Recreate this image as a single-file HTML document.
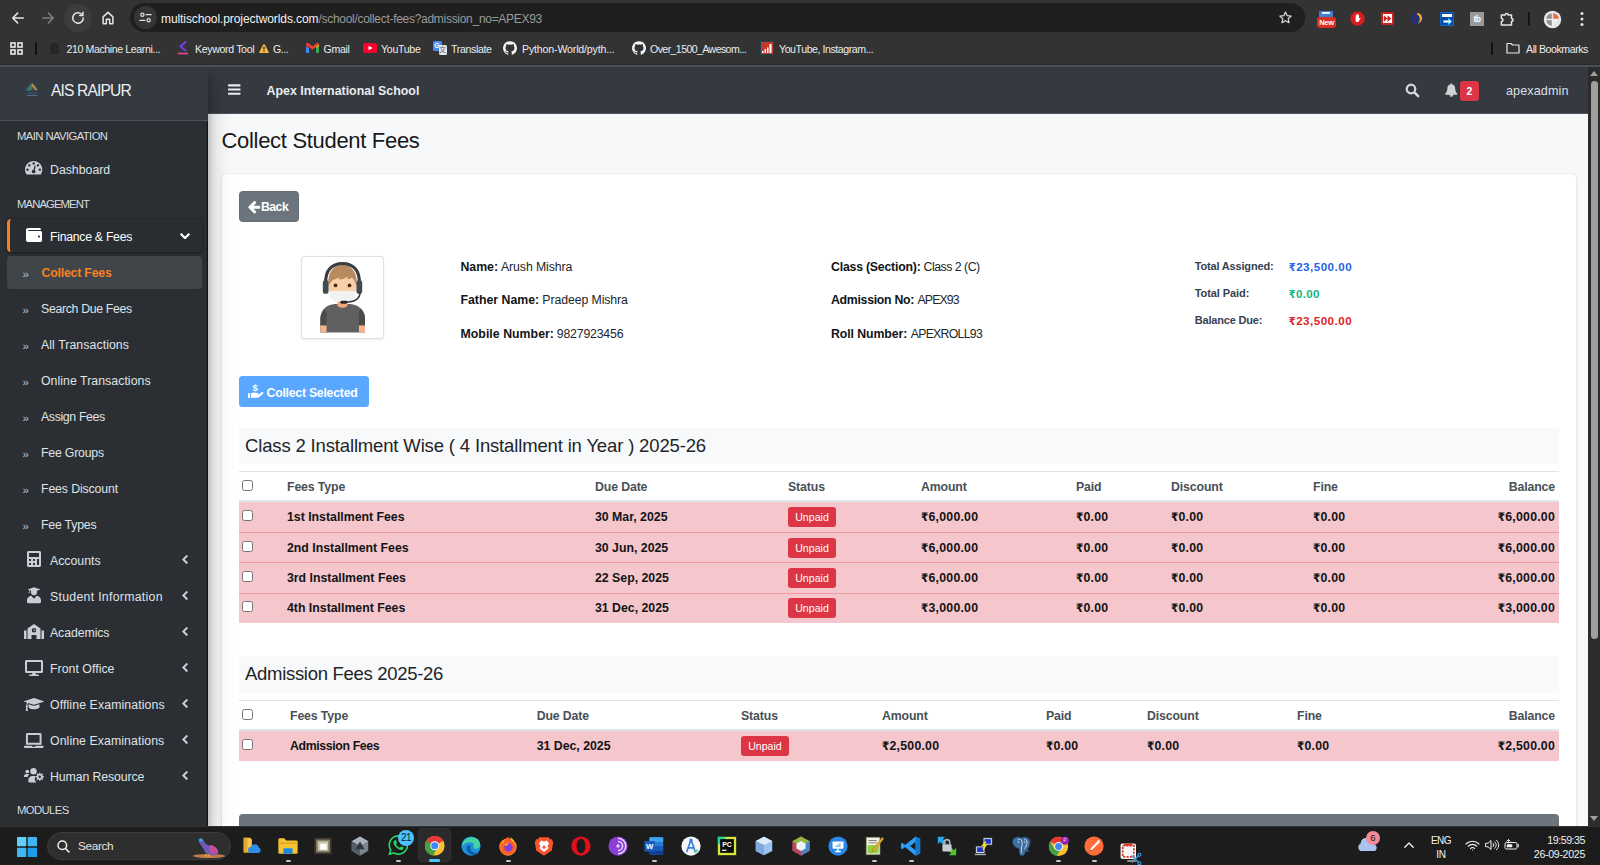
<!DOCTYPE html>
<html lang="en">
<head>
<meta charset="utf-8">
<title>Collect Student Fees</title>
<style>
*{box-sizing:border-box;margin:0;padding:0}
html,body{width:1600px;height:865px;overflow:hidden;background:#1c1c1c}
body{font-family:"Liberation Sans",sans-serif;font-size:12.3px;color:#212529;position:relative}
svg{display:block}
.a{position:absolute}

/* ---------- browser chrome ---------- */
#toolbar{position:absolute;left:0;top:0;width:1600px;height:66px;background:#333333}
#omni{position:absolute;left:130px;top:3px;width:1175px;height:29px;border-radius:15px;background:#1f1f1f}
#omni .chip{position:absolute;left:4px;top:3px;width:23px;height:23px;border-radius:12px;background:#353535}
#url{position:absolute;left:31px;top:1.5px;line-height:29px;font-size:12px;color:#9a9a9a;letter-spacing:-0.29px;white-space:nowrap}
#url b{font-weight:400;color:#f1f1f1;letter-spacing:-0.09px}
#reloadbg{position:absolute;left:64px;top:4px;width:28px;height:28px;border-radius:14px;background:#3c3c3c}
#bm{position:absolute;left:0;top:36px;width:1600px;height:28px;color:#ececec;font-size:10.6px;white-space:nowrap}
#bm .t{position:absolute;top:0.5px;line-height:24px;letter-spacing:-0.42px}
#bm .ic{position:absolute;top:5px}
#chromeline{position:absolute;left:0;top:64px;width:1600px;height:3px;background:#4b5056;border-top:1px solid #2a2a2a;z-index:9}

/* ---------- page ---------- */
#page{position:absolute;left:0;top:66px;width:1588px;height:760px;background:#f7f8fa;overflow:hidden}
#sidebar{position:absolute;left:0;top:0;width:208px;height:760px;background:#2b2f34;color:#e3e6e9;z-index:3;box-shadow:0 11.7px 23.3px rgba(0,0,0,.25),0 8.3px 8.3px rgba(0,0,0,.22),inset -1.2px 0 0 rgba(10,12,16,.75)}
#brand{position:absolute;left:0;top:0;width:208px;height:55px;background:#343a40;border-bottom:1px solid #4b545c}
#brand .bt{position:absolute;left:51px;top:0;line-height:49.5px;font-size:15.6px;color:#eceef0;letter-spacing:-0.85px;white-space:nowrap}
.nh{position:absolute;left:17px;font-size:11.3px;color:#d9dcdf;letter-spacing:-0.6px;white-space:nowrap;line-height:14px;height:14px}
.ni{position:absolute;left:50px;font-size:12.3px;color:#dfe3e7;white-space:nowrap;line-height:16px;height:16px;letter-spacing:-0.22px}
.si{position:absolute;left:41px;font-size:12.3px;color:#dfe3e7;white-space:nowrap;line-height:16px;height:16px;letter-spacing:-0.2px}
.rq{position:absolute;left:22.5px;font-size:11.5px;color:#b5c0cc;line-height:16px;height:16px;margin-top:.5px}
.nic{position:absolute;color:#e6e9ec}
.car{position:absolute;left:181px;color:#e6e9ec}
#fin{position:absolute;left:6.5px;top:152.7px;width:195.5px;height:33.6px;border-radius:4px;background:#2a2d32;border-left:3px solid #f5821f;box-shadow:0 1px 3px rgba(0,0,0,.4),0 0 2px rgba(0,0,0,.25)}
#cf{position:absolute;left:6.7px;top:190px;width:195.3px;height:33px;border-radius:4px;background:#40454a}
#navbar{position:absolute;left:208px;top:0;width:1380px;height:48px;background:#343a40;border-bottom:1px solid #4b545c;z-index:2;color:#e9ecef}
#navbar .ttl{position:absolute;left:58.5px;top:1.5px;line-height:47px;font-size:12.4px;font-weight:700;white-space:nowrap}
#navbar .usr{position:absolute;left:1298px;top:1.5px;line-height:47px;font-size:12.6px;white-space:nowrap;letter-spacing:0.1px;color:#dcdfe2}
#nbadge{position:absolute;left:1252px;top:15px;width:19px;height:19.5px;border-radius:3px;background:#dc3545;color:#fff;font-size:10.5px;font-weight:700;line-height:20px;text-align:center;box-shadow:0 0 0 .5px #1f3a3f}
#h1{position:absolute;left:221.5px;top:58px;font-size:22px;line-height:32px;color:#17191c;letter-spacing:-0.31px;white-space:nowrap}
#card{position:absolute;left:221.6px;top:107px;width:1354.6px;height:700px;background:#fff;border-radius:4px 4px 0 0;box-shadow:0 0 1px rgba(0,0,0,.2),0 1px 3px rgba(0,0,0,.14)}
.btn{position:absolute;border-radius:3.5px;color:#fff;font-size:12.3px;font-weight:700;white-space:nowrap}
#back{left:239px;top:191px;width:60px;height:31px;background:#6c757d;border:1px solid #646c74}
#csel{left:239px;top:376px;width:130px;height:31px;background:#59a7ff}
.lb{position:absolute;white-space:nowrap;font-size:12.3px;line-height:16px;height:16px;color:#212529}
.lb b{color:#111417}
.tl{position:absolute;white-space:nowrap;font-size:11px;line-height:14px;height:14px;font-weight:700;color:#374151}
.tv{position:absolute;white-space:nowrap;font-size:11.6px;line-height:15px;height:15px;font-weight:700}
#avatar{position:absolute;left:301.4px;top:256px;width:83px;height:83px;border:1px solid #dee2e6;border-radius:3px;background:#fff;box-shadow:0 1px 2px rgba(0,0,0,.08)}
.gh{position:absolute;left:238.5px;width:1320.5px;height:37px;background:#f8f9fa;font-size:18.5px;line-height:37px;padding-left:6.5px;color:#1f2428;letter-spacing:-0.17px;white-space:nowrap}
table{position:absolute;left:238.5px;width:1320.5px;border-collapse:separate;border-spacing:0;table-layout:fixed;font-size:12.3px}
th,td{padding:0 4px;text-align:left;vertical-align:middle;white-space:nowrap;overflow:visible}
th{font-weight:700;color:#495057;height:30.7px;border-top:1px solid #dee2e6;border-bottom:2px solid #e1e6ea;letter-spacing:-0.12px;padding-top:2px}
td{font-weight:700;color:#111417;height:30.5px;background:#f5c6cb;border-top:1px solid #ee9aa2;letter-spacing:0}
tr.f td{border-top:0;height:30.3px}
#t2 tr.f td{height:29.8px}
tr.l td{height:30px}
td.m{letter-spacing:.23px}
.r{font-family:"DejaVu Sans Condensed","DejaVu Sans",sans-serif;font-size:.95em}
th:last-child,td:last-child{text-align:right}
.cb{display:block;width:11px;height:11px;border:1px solid #767676;border-radius:2.5px;background:#fff;margin-top:-3px;margin-left:-.5px}
.bdg{display:inline-block;width:48px;height:20px;border-radius:3px;background:#dc3545;color:#fff;font-size:10.6px;font-weight:400;line-height:20px;text-align:center;letter-spacing:0;vertical-align:middle}
#gbar{position:absolute;left:238.5px;top:814.3px;width:1320.5px;height:20px;background:#6c757d;border-radius:4px 4px 0 0}

/* ---------- scrollbar ---------- */
#sb{position:absolute;left:1588px;top:66px;width:12px;height:760px;background:#2c2c2c}
#sb .th{position:absolute;left:3px;top:15px;width:7px;height:558px;border-radius:4px;background:#9f9f9f}
#sb .up{position:absolute;left:2px;top:5px;width:0;height:0;border-left:4px solid transparent;border-right:4px solid transparent;border-bottom:5px solid #9f9f9f}
#sb .dn{position:absolute;left:2px;top:750px;width:0;height:0;border-left:4px solid transparent;border-right:4px solid transparent;border-top:5px solid #9f9f9f}

/* ---------- taskbar ---------- */
#taskbar{position:absolute;left:0;top:826px;width:1600px;height:39px;background:#1c1c1c;color:#f2f2f2;box-shadow:inset 0 1px 0 #343434}
#tsearch{position:absolute;left:47px;top:6px;width:184px;height:28px;border-radius:14px;background:#2e2e2e;border:1px solid #3b3b3b}
#tsearch .t{position:absolute;left:30px;top:0;line-height:26px;font-size:11.8px;color:#e4e4e4;letter-spacing:-0.35px}
.ti{position:absolute;top:9px;width:22px;height:22px;margin-left:1px}
.tu{position:absolute;top:33.5px;height:2.5px;border-radius:1.2px;background:#c4c4c4}
.tt{position:absolute;white-space:nowrap;font-size:10.6px;line-height:13px;color:#f2f2f2;letter-spacing:-0.35px}
</style>
</head>
<body>

<!-- ================= BROWSER CHROME ================= -->
<div id="toolbar">
  <div id="reloadbg"></div>
  <!-- back / forward / reload / home -->
  <svg class="a" style="left:9px;top:9px" width="18" height="18" viewBox="0 0 24 24" fill="none" stroke="#e6e6e6" stroke-width="2" stroke-linecap="round" stroke-linejoin="round"><path d="M19 12H5.5M11.5 5.5 5 12l6.5 6.5"/></svg>
  <svg class="a" style="left:39px;top:9px" width="18" height="18" viewBox="0 0 24 24" fill="none" stroke="#7d7d7d" stroke-width="2" stroke-linecap="round" stroke-linejoin="round"><path d="M5 12h13.5M12.5 5.5 19 12l-6.5 6.5"/></svg>
  <svg class="a" style="left:69px;top:9px" width="18" height="18" viewBox="0 0 24 24" fill="none" stroke="#e6e6e6" stroke-width="2" stroke-linecap="round" stroke-linejoin="round"><path d="M19 12a7 7 0 1 1-2.2-5.1"/><path d="M18.6 4.2v4.4h-4.4" /></svg>
  <svg class="a" style="left:99px;top:9px" width="18" height="18" viewBox="0 0 24 24" fill="none" stroke="#e6e6e6" stroke-width="2" stroke-linecap="round" stroke-linejoin="round"><path d="M5.5 10.5 12 4.5l6.5 6v9h-4.300v-6H9.800v6H5.500z"/></svg>

  <div id="omni">
    <div class="chip"></div>
    <svg class="a" style="left:8px;top:7px" width="15" height="15" viewBox="0 0 24 24" fill="none" stroke="#e0e0e0" stroke-width="2" stroke-linecap="round"><circle cx="7" cy="7.500" r="2.600"/><path d="M13 7.500h8"/><circle cx="17" cy="16.500" r="2.600"/><path d="M3 16.500h8"/></svg>
    <div id="url"><b>multischool.projectworlds.com</b>/school/collect-fees?admission_no=APEX93</div>
    <!-- star -->
    <svg class="a" style="left:1148px;top:7px" width="15" height="15" viewBox="0 0 24 24" fill="none" stroke="#dcdcdc" stroke-width="1.900" stroke-linejoin="round"><path d="M12 3.200l2.700 5.900 6.400.700-4.800 4.300 1.400 6.300L12 17.100l-5.700 3.300 1.400-6.300-4.800-4.300 6.400-.700z"/></svg>
  </div>

  <!-- extension icons -->
  <div class="a" style="left:1319px;top:11px;width:14px;height:6px;background:#3f7fd6;border-radius:1px"></div>
  <div class="a" style="left:1322px;top:12px;width:8px;height:2px;background:#e8f0fb"></div>
  <div class="a" style="left:1317px;top:17px;width:19px;height:11px;border-radius:3px;background:#d93025;color:#fff;font-size:7.5px;font-weight:700;line-height:11px;text-align:center;letter-spacing:-0.3px">New</div>
  <svg class="a" style="left:1350px;top:11px" width="15" height="15" viewBox="0 0 24 24"><path fill="#e01b1b" d="M7.500 1h9L23 7.500v9L16.500 23h-9L1 16.500v-9z"/><path fill="#fff" d="M9 7.500c0-.800 1.300-.800 1.300 0V6c0-.900 1.400-.900 1.400 0v-.500c0-.900 1.400-.900 1.400 0V6.500c0-.800 1.300-.800 1.300 0v6l1.200-1.300c.700-.600 1.500.100 1 .800l-2.400 4.200c-.400.800-1.100 1.300-2 1.300h-1.400C9.500 17.500 9 16.500 9 15z"/></svg>
  <div class="a" style="left:1381px;top:12px;width:13px;height:13px;border-radius:2px;background:#fff;border:2px solid #d11f1f"></div>
  <svg class="a" style="left:1383px;top:14px" width="9" height="9" viewBox="0 0 24 24"><path fill="#d11f1f" d="M2 3l10 9-10 9zM12 3l10 9-10 9z"/></svg>
  <svg class="a" style="left:1410px;top:11px" width="15" height="15" viewBox="0 0 24 24"><circle cx="11" cy="12" r="10" fill="#27316b"/><path fill="#f5a623" d="M13 3c6 2 8 8 5 13-1.500 2.500-4 4-6 4 3-2 4-5 3.500-8S14 6 11 5.500C11 4 12 3 13 3z"/></svg>
  <div class="a" style="left:1440px;top:12px;width:14px;height:14px;background:#0d47a1;border:1px solid #1565c0"></div>
  <div class="a" style="left:1442px;top:14px;width:10px;height:3px;background:#fff"></div>
  <svg class="a" style="left:1443px;top:17px" width="10" height="9" viewBox="0 0 20 18"><path fill="#29b6f6" d="M0 6h10V1l9 8-9 8v-5H0z"/><path fill="#fff" d="M2 7.500h9.500V4.500l5 4.500-5 4.500v-3H2z"/></svg>
  <div class="a" style="left:1470px;top:12px;width:14px;height:14px;background:#9a9a9a;color:#fff;font-size:8.5px;font-weight:700;line-height:14px;text-align:center;letter-spacing:-0.5px">tb</div>
  <svg class="a" style="left:1498px;top:10px" width="18" height="18" viewBox="0 0 24 24" fill="none" stroke="#e6e6e6" stroke-width="2" stroke-linejoin="round"><path d="M9.500 6.500a2 2 0 0 1 4 0H18v4.700a2 2 0 0 1 0 4V20H4.500v-4.500a2.100 2.100 0 0 0 0-4.200V6.500z"/></svg>
  <div class="a" style="left:1528px;top:12px;width:2px;height:14px;background:#141414;border-radius:1px"></div>
  <svg class="a" style="left:1543px;top:10px" width="19" height="19" viewBox="0 0 24 24"><circle cx="12" cy="12" r="11" fill="#e8e8e8"/><circle cx="12" cy="12" r="8" fill="#8d8d8d"/><path fill="#ef6c3a" d="M12 12V4a8 8 0 0 1 8 8z"/><path fill="#e8e8e8" d="M11 3h2v18h-2zM3 11h18v2H3z"/><path fill="#fff" d="M12 12h8a8 8 0 0 1-8 8z" opacity=".850"/></svg>
  <svg class="a" style="left:1579px;top:11px" width="6" height="16" viewBox="0 0 6 16" fill="#e6e6e6"><circle cx="3" cy="2.500" r="1.500"/><circle cx="3" cy="8" r="1.500"/><circle cx="3" cy="13.500" r="1.500"/></svg>

  <!-- bookmarks bar -->
  <div id="bm">
    <svg class="a" style="left:10px;top:6px" width="13" height="13" viewBox="0 0 13 13" fill="none" stroke="#e8e8e8" stroke-width="1.600"><rect x="1" y="1" width="4" height="4"/><rect x="8" y="1" width="4" height="4"/><rect x="1" y="8" width="4" height="4"/><rect x="8" y="8" width="4" height="4"/></svg>
    <div class="a" style="left:35px;top:6px;width:2px;height:13px;background:#111;border-radius:1px"></div>
    <div class="a" style="left:50px;top:7px;width:9px;height:11px;background:#262626;border-radius:2px"></div>
    <span class="t" style="left:66.500px;letter-spacing:-0.400px">210 Machine Learni...</span>
    <svg class="a" style="left:177px;top:5px" width="12" height="14" viewBox="0 0 12 14" fill="none"><path d="M8.500 1 3.500 5.500l5 4" stroke="#7c3aed" stroke-width="2" stroke-linecap="round" stroke-linejoin="round"/><path d="M1 12.500h10" stroke="#ec4899" stroke-width="1.600"/></svg>
    <span class="t" style="left:195px;letter-spacing:-0.350px">Keyword Tool</span>
    <svg width="10" height="9" viewBox="-1 -1536 1794 1664" preserveAspectRatio="xMidYMid meet" class="a" style="left:258.500px;top:7.500px"><path fill="#f6b73c" transform="scale(1,-1)" d="M1024 161V351Q1024 365 1014 374Q1005 384 992 384H800Q787 384 778 374Q768 365 768 351V161Q768 147 778 138Q787 128 800 128H992Q1005 128 1014 138Q1024 147 1024 161ZM1022 535 1040 994Q1040 1006 1030 1013Q1017 1024 1006 1024H786Q775 1024 762 1013Q752 1006 752 992L769 535Q769 525 779 518Q789 512 803 512H988Q1002 512 1012 518Q1021 525 1022 535ZM1008 1469 1776 61Q1811 -2 1774 -65Q1757 -94 1728 -111Q1698 -128 1664 -128H128Q94 -128 64 -111Q35 -94 18 -65Q-19 -2 16 61L784 1469Q801 1500 831 1518Q861 1536 896 1536Q931 1536 961 1518Q991 1500 1008 1469Z"/></svg>
    <span class="t" style="left:273px">G...</span>
    <svg class="a" style="left:306px;top:7px" width="13" height="10" viewBox="0 0 26 20"><path fill="#4285f4" d="M0 3v15a2 2 0 0 0 2 2h4V8z"/><path fill="#34a853" d="M26 3v15a2 2 0 0 1-2 2h-4V8z"/><path fill="#ea4335" d="M0 3c0-3 3-4 5-2.500l8 6 8-6C23-1 26 0 26 3l-6 5-7 5.200L6 8z"/><path fill="#fbbc04" d="M20 8l6-5v3l-6 4.500z"/><path fill="#c5221f" d="M6 8 0 3v3l6 4.500z"/></svg>
    <span class="t" style="left:323.500px;letter-spacing:-0.300px">Gmail</span>
    <svg class="a" style="left:362.500px;top:7px" width="14" height="10" viewBox="0 0 28 20"><rect width="28" height="20" rx="5" fill="#ff0033"/><path fill="#fff" d="M11 5.500v9l8-4.500z"/></svg>
    <span class="t" style="left:381px;letter-spacing:-0.300px">YouTube</span>
    <div class="a" style="left:432.500px;top:5px;width:9px;height:10px;background:#4a8af4;border-radius:1.500px;color:#fff;font-size:7px;font-weight:700;line-height:10px;text-align:center">G</div>
    <div class="a" style="left:438.500px;top:9px;width:8px;height:10px;background:#e3e6ea;border-radius:1.500px;color:#5f6368;font-size:7px;line-height:10px;text-align:center;font-family:'Liberation Sans','Noto Sans CJK SC',sans-serif">文</div>
    <span class="t" style="left:451px;letter-spacing:-0.350px">Translate</span>
    <svg width="14" height="14" viewBox="0 -1408 1536 1498" preserveAspectRatio="xMidYMid meet" class="a" style="left:503px;top:5px"><path fill="#f3f3f3" transform="scale(1,-1)" d="M1536 640Q1536 389 1390 188Q1243 -12 1011 -89Q984 -94 971 -82Q958 -70 958 -52Q958 -49 958 24Q959 98 959 159Q959 256 907 301Q964 307 1010 319Q1055 331 1104 358Q1152 385 1184 424Q1217 464 1238 530Q1258 595 1258 680Q1258 799 1179 886Q1216 977 1171 1090Q1143 1099 1090 1079Q1037 1059 998 1035L960 1011Q867 1037 768 1037Q669 1037 576 1011Q560 1022 534 1038Q507 1054 450 1076Q393 1099 365 1090Q320 977 357 886Q278 799 278 680Q278 595 298 530Q319 465 351 425Q383 385 432 358Q480 331 526 319Q571 307 628 301Q589 265 579 198Q558 188 534 183Q510 178 477 178Q444 178 412 200Q379 221 356 262Q337 294 308 314Q278 334 258 338L238 341Q217 341 209 336Q201 332 204 325Q207 318 213 311Q219 304 226 299L233 294Q255 284 276 256Q298 228 308 205L318 182Q331 144 362 120Q393 97 429 90Q465 84 498 84Q532 83 554 87L577 91Q577 53 578 2Q578 -48 578 -52Q578 -70 565 -82Q552 -94 525 -89Q293 -12 146 188Q0 389 0 640Q0 849 103 1026Q206 1202 382 1305Q559 1408 768 1408Q977 1408 1154 1305Q1330 1202 1433 1026Q1536 849 1536 640ZM291 305Q294 312 284 317Q274 320 271 315Q268 308 278 303Q287 297 291 305ZM322 271Q329 276 320 287Q310 296 304 290Q297 285 306 274Q316 264 322 271ZM352 226Q361 233 352 245Q344 258 335 251Q326 246 335 233Q344 220 352 226ZM394 184Q402 192 390 203Q378 215 370 206Q361 198 374 187Q386 175 394 184ZM451 159Q454 170 438 175Q423 179 419 168Q415 157 432 153Q447 147 451 159ZM514 154Q514 167 497 165Q481 165 481 154Q481 141 498 143Q514 143 514 154ZM572 164Q570 175 554 173Q538 170 540 158Q542 146 558 150Q574 154 572 164Z"/></svg>
    <span class="t" style="left:522px;letter-spacing:-0.160px">Python-World/pyth...</span>
    <svg width="14" height="14" viewBox="0 -1408 1536 1498" preserveAspectRatio="xMidYMid meet" class="a" style="left:631.500px;top:5px"><path fill="#f3f3f3" transform="scale(1,-1)" d="M1536 640Q1536 389 1390 188Q1243 -12 1011 -89Q984 -94 971 -82Q958 -70 958 -52Q958 -49 958 24Q959 98 959 159Q959 256 907 301Q964 307 1010 319Q1055 331 1104 358Q1152 385 1184 424Q1217 464 1238 530Q1258 595 1258 680Q1258 799 1179 886Q1216 977 1171 1090Q1143 1099 1090 1079Q1037 1059 998 1035L960 1011Q867 1037 768 1037Q669 1037 576 1011Q560 1022 534 1038Q507 1054 450 1076Q393 1099 365 1090Q320 977 357 886Q278 799 278 680Q278 595 298 530Q319 465 351 425Q383 385 432 358Q480 331 526 319Q571 307 628 301Q589 265 579 198Q558 188 534 183Q510 178 477 178Q444 178 412 200Q379 221 356 262Q337 294 308 314Q278 334 258 338L238 341Q217 341 209 336Q201 332 204 325Q207 318 213 311Q219 304 226 299L233 294Q255 284 276 256Q298 228 308 205L318 182Q331 144 362 120Q393 97 429 90Q465 84 498 84Q532 83 554 87L577 91Q577 53 578 2Q578 -48 578 -52Q578 -70 565 -82Q552 -94 525 -89Q293 -12 146 188Q0 389 0 640Q0 849 103 1026Q206 1202 382 1305Q559 1408 768 1408Q977 1408 1154 1305Q1330 1202 1433 1026Q1536 849 1536 640ZM291 305Q294 312 284 317Q274 320 271 315Q268 308 278 303Q287 297 291 305ZM322 271Q329 276 320 287Q310 296 304 290Q297 285 306 274Q316 264 322 271ZM352 226Q361 233 352 245Q344 258 335 251Q326 246 335 233Q344 220 352 226ZM394 184Q402 192 390 203Q378 215 370 206Q361 198 374 187Q386 175 394 184ZM451 159Q454 170 438 175Q423 179 419 168Q415 157 432 153Q447 147 451 159ZM514 154Q514 167 497 165Q481 165 481 154Q481 141 498 143Q514 143 514 154ZM572 164Q570 175 554 173Q538 170 540 158Q542 146 558 150Q574 154 572 164Z"/></svg>
    <span class="t" style="left:650px;letter-spacing:-0.600px">Over_1500_Awesom...</span>
    <div class="a" style="left:760px;top:5px;width:14px;height:14px;background:#c5372c;border:1px solid #24424a"></div>
    <svg class="a" style="left:762px;top:8px" width="11" height="9" viewBox="0 0 11 9" fill="#fff"><rect x="0" y="7" width="1.500" height="2"/><rect x="2.500" y="5" width="1.500" height="4"/><rect x="5" y="3.500" width="1.500" height="5.500"/><rect x="7.500" y="0" width="2" height="9"/></svg>
    <span class="t" style="left:779px;letter-spacing:-0.440px">YouTube, Instagram...</span>
    <div class="a" style="left:1491px;top:6px;width:2px;height:13px;background:#111;border-radius:1px"></div>
    <svg class="a" style="left:1506px;top:6px" width="14" height="12" viewBox="0 0 14 12" fill="none" stroke="#e8e8e8" stroke-width="1.200" stroke-linejoin="round"><path d="M1 1.500h4l1.500 1.500H13v8H1z"/></svg>
    <span class="t" style="left:1526px;letter-spacing:-0.440px">All Bookmarks</span>
  </div>
  <div id="chromeline"></div>
</div>

<!-- ================= PAGE ================= -->
<div id="page">
  <div id="sidebar">
    <div id="brand">
      <svg class="a" style="left:24.500px;top:14.500px;opacity:.820" width="14" height="16" viewBox="0 0 28 32"><path d="M14 1C8 4 3 11 2 20h24C25 11 20 4 14 1z" fill="#3a5878" opacity=".550"/><path d="M4 19l7-12 4 6-3 6z" fill="#3f9a46"/><path d="M12 8l3-3 10 13-4 .500z" fill="#e3a72f"/><path d="M2 17l4-5 3 3-3 4z" fill="#2f6fc0"/><path d="M5 23h3v3H5zM10 23h3v3h-3zM15 23h3v3h-3zM20 23h3v3h-3z" fill="#2c62a8"/><path d="M4 28h20v1.600H4z" fill="#5d86b4"/></svg>
      <div class="bt">AIS RAIPUR</div>
    </div>
    <div class="nh" style="top:63px">MAIN NAVIGATION</div>
    <svg width="17.3" height="13.6" viewBox="0 -1280 1792 1408" preserveAspectRatio="xMidYMid meet" class="a" style="left:25.4px;top:95.4px"><path fill="#c9ced6" transform="scale(1,-1)" d="M346 294Q384 331 384 384Q384 437 346 474Q309 512 256 512Q203 512 166 474Q128 437 128 384Q128 331 166 294Q203 256 256 256Q309 256 346 294ZM538 742Q576 779 576 832Q576 885 538 922Q501 960 448 960Q395 960 358 922Q320 885 320 832Q320 779 358 742Q395 704 448 704Q501 704 538 742ZM1004 351 1105 733Q1111 759 1098 782Q1084 804 1059 811Q1034 818 1011 804Q988 791 981 765L880 383Q820 378 773 340Q726 301 710 241Q690 164 730 95Q770 26 847 6Q924 -14 993 26Q1062 66 1082 143Q1098 203 1076 260Q1054 317 1004 351ZM1626 294Q1664 331 1664 384Q1664 437 1626 474Q1589 512 1536 512Q1483 512 1446 474Q1408 437 1408 384Q1408 331 1446 294Q1483 256 1536 256Q1589 256 1626 294ZM986 934Q1024 971 1024 1024Q1024 1077 986 1114Q949 1152 896 1152Q843 1152 806 1114Q768 1077 768 1024Q768 971 806 934Q843 896 896 896Q949 896 986 934ZM1434 742Q1472 779 1472 832Q1472 885 1434 922Q1397 960 1344 960Q1291 960 1254 922Q1216 885 1216 832Q1216 779 1254 742Q1291 704 1344 704Q1397 704 1434 742ZM1792 384Q1792 123 1651 -99Q1632 -128 1597 -128H195Q160 -128 141 -99Q0 122 0 384Q0 566 71 732Q142 898 262 1018Q382 1138 548 1209Q714 1280 896 1280Q1078 1280 1244 1209Q1410 1138 1530 1018Q1650 898 1721 732Q1792 566 1792 384Z"/></svg>
    <div class="ni" style="top:96px;letter-spacing:0px">Dashboard</div>
    <div class="nh" style="top:130.500px;letter-spacing:-0.9px">MANAGEMENT</div>

    <div id="fin"></div>
    <svg class="a" style="left:26px;top:160.700px" width="16" height="16" viewBox="0 0 512 512" fill="#fff"><path d="M461.200 128H80c-8.840 0-16-7.160-16-16s7.160-16 16-16h384c8.840 0 16-7.160 16-16 0-26.510-21.490-48-48-48H64C28.650 32 0 60.650 0 96v320c0 35.350 28.650 64 64 64h397.200c28.020 0 50.800-21.530 50.800-48V176c0-26.470-22.780-48-50.800-48zM416 336c-17.670 0-32-14.330-32-32s14.330-32 32-32 32 14.330 32 32-14.330 32-32 32z"/></svg>
    <div class="ni" style="top:162.5px;color:#fff;letter-spacing:-0.29px">Finance &amp; Fees</div>
    <svg width="10" height="6.500" viewBox="90 -1003 1612 1035" preserveAspectRatio="xMidYMid meet" class="a" style="left:179.500px;top:166.500px"><path fill="#fff" transform="scale(1,-1)" d="M1683 728 941 -13Q922 -32 896 -32Q870 -32 851 -13L109 728Q90 747 90 774Q90 800 109 819L275 984Q294 1003 320 1003Q346 1003 365 984L896 453L1427 984Q1446 1003 1472 1003Q1498 1003 1517 984L1683 819Q1702 800 1702 774Q1702 747 1683 728Z"/></svg>

    <div id="cf"></div>
    <div class="rq" style="top:199px">»</div>
    <div class="si" style="top:199px;left:41.500px;color:#f5821f;font-weight:700;letter-spacing:-0.200px">Collect Fees</div>
    <div class="rq" style="top:235px">»</div><div class="si" style="top:235px;letter-spacing:-0.320px">Search Due Fees</div>
    <div class="rq" style="top:271px">»</div><div class="si" style="top:271px;letter-spacing:0.075px">All Transactions</div>
    <div class="rq" style="top:307px">»</div><div class="si" style="top:307px;letter-spacing:0.050px">Online Transactions</div>
    <div class="rq" style="top:343px">»</div><div class="si" style="top:343px;letter-spacing:-0.34px">Assign Fees</div>
    <div class="rq" style="top:379px">»</div><div class="si" style="top:379px">Fee Groups</div>
    <div class="rq" style="top:415px">»</div><div class="si" style="top:415px;letter-spacing:-0.12px">Fees Discount</div>
    <div class="rq" style="top:451px">»</div><div class="si" style="top:451px">Fee Types</div>

    <svg class="a" style="left:27px;top:485.300px" width="14" height="16" viewBox="0 0 448 512" fill="#c9ced6"><path d="M400 0H48C22.400 0 0 22.400 0 48v416c0 25.600 22.400 48 48 48h352c25.600 0 48-22.400 48-48V48c0-25.600-22.400-48-48-48zM128 435.200c0 6.400-6.400 12.800-12.800 12.800H76.800c-6.400 0-12.800-6.400-12.800-12.800v-38.400c0-6.400 6.400-12.800 12.800-12.800h38.400c6.400 0 12.800 6.400 12.800 12.800v38.400zm0-128c0 6.400-6.400 12.800-12.800 12.800H76.800c-6.400 0-12.800-6.400-12.800-12.800v-38.400c0-6.400 6.400-12.800 12.800-12.800h38.400c6.400 0 12.800 6.400 12.800 12.800v38.400zm128 128c0 6.400-6.400 12.800-12.800 12.800h-38.400c-6.400 0-12.800-6.400-12.800-12.800v-38.400c0-6.400 6.400-12.800 12.800-12.800h38.400c6.400 0 12.800 6.400 12.800 12.800v38.400zm0-128c0 6.400-6.400 12.800-12.800 12.800h-38.400c-6.400 0-12.800-6.400-12.800-12.800v-38.400c0-6.400 6.400-12.800 12.800-12.800h38.400c6.400 0 12.800 6.400 12.800 12.800v38.400zm128 128c0 6.400-6.400 12.800-12.800 12.800h-38.400c-6.400 0-12.800-6.400-12.800-12.800V268.800c0-6.400 6.400-12.800 12.800-12.800h38.400c6.400 0 12.800 6.400 12.800 12.800v166.400zm0-256c0 6.400-6.400 12.800-12.800 12.800H76.800c-6.400 0-12.800-6.400-12.800-12.800V76.800C64 70.400 70.400 64 76.800 64h294.400c6.400 0 12.800 6.400 12.800 12.800v102.400z"/></svg>
    <div class="ni" style="top:487px;letter-spacing:0px">Accounts</div>
    <svg width="6" height="9" viewBox="154 -1510 1036 1612" preserveAspectRatio="xMidYMid meet" class="a" style="left:182px;top:489px"><path fill="#c9ced6" transform="scale(1,-1)" d="M1171 1235 640 704 1171 173Q1190 154 1190 128Q1190 102 1171 83L1005 -83Q986 -102 960 -102Q934 -102 915 -83L173 659Q154 678 154 704Q154 730 173 749L915 1491Q934 1510 960 1510Q986 1510 1005 1491L1171 1325Q1190 1306 1190 1280Q1190 1254 1171 1235Z"/></svg>

    <svg class="a" style="left:27px;top:521.300px" width="14" height="16.500" viewBox="0 0 28 32" fill="#c9ced6"><path d="M14 0 1 4.500l3 1V9l-1 1.500L4.500 12 6 10.500 5 9V6l3 1v3a6 6 0 0 0 12 0V7l7-2.500zM8.500 17C4 17.500 0 21 0 26v3a3 3 0 0 0 3 3h22a3 3 0 0 0 3-3v-3c0-5-4-8.500-8.500-9L14 23z"/></svg>
    <div class="ni" style="top:523px;letter-spacing:0.29px">Student Information</div>
    <svg width="6" height="9" viewBox="154 -1510 1036 1612" preserveAspectRatio="xMidYMid meet" class="a" style="left:182px;top:525px"><path fill="#c9ced6" transform="scale(1,-1)" d="M1171 1235 640 704 1171 173Q1190 154 1190 128Q1190 102 1171 83L1005 -83Q986 -102 960 -102Q934 -102 915 -83L173 659Q154 678 154 704Q154 730 173 749L915 1491Q934 1510 960 1510Q986 1510 1005 1491L1171 1325Q1190 1306 1190 1280Q1190 1254 1171 1235Z"/></svg>

    <svg class="a" style="left:24px;top:558px" width="20" height="15" viewBox="0 0 40 30" fill="#c9ced6"><path d="M0 13h5v17H0zM35 13h5v17h-5zM20 0 7 9v21h8v-8h10v8h8V9zm0 8a4.500 4.500 0 1 1 0 9 4.500 4.500 0 0 1 0-9z" fill-rule="evenodd"/><path d="M19.300 9.500h1.400v2.800h2.300v1.400h-3.700z" /></svg>
    <div class="ni" style="top:558.5px;letter-spacing:-0.08px">Academics</div>
    <svg width="6" height="9" viewBox="154 -1510 1036 1612" preserveAspectRatio="xMidYMid meet" class="a" style="left:182px;top:561px"><path fill="#c9ced6" transform="scale(1,-1)" d="M1171 1235 640 704 1171 173Q1190 154 1190 128Q1190 102 1171 83L1005 -83Q986 -102 960 -102Q934 -102 915 -83L173 659Q154 678 154 704Q154 730 173 749L915 1491Q934 1510 960 1510Q986 1510 1005 1491L1171 1325Q1190 1306 1190 1280Q1190 1254 1171 1235Z"/></svg>

    <svg class="a" style="left:25px;top:594px" width="18" height="16" viewBox="0 0 576 512" fill="#c9ced6"><path d="M528 0H48C21.500 0 0 21.500 0 48v320c0 26.500 21.500 48 48 48h192l-16 48h-72c-13.300 0-24 10.700-24 24s10.700 24 24 24h272c13.300 0 24-10.700 24-24s-10.700-24-24-24h-72l-16-48h192c26.500 0 48-21.500 48-48V48c0-26.500-21.500-48-48-48zm-16 352H64V64h448v288z"/></svg>
    <div class="ni" style="top:595px;letter-spacing:0.04px">Front Office</div>
    <svg width="6" height="9" viewBox="154 -1510 1036 1612" preserveAspectRatio="xMidYMid meet" class="a" style="left:182px;top:597px"><path fill="#c9ced6" transform="scale(1,-1)" d="M1171 1235 640 704 1171 173Q1190 154 1190 128Q1190 102 1171 83L1005 -83Q986 -102 960 -102Q934 -102 915 -83L173 659Q154 678 154 704Q154 730 173 749L915 1491Q934 1510 960 1510Q986 1510 1005 1491L1171 1325Q1190 1306 1190 1280Q1190 1254 1171 1235Z"/></svg>

    <svg width="20" height="13.500" viewBox="0 -1408 2304 1536" preserveAspectRatio="xMidYMid meet" class="a" style="left:24px;top:631.500px"><path fill="#c9ced6" transform="scale(1,-1)" d="M1774 700 1792 384Q1796 315 1710 256Q1624 197 1475 162Q1326 128 1152 128Q978 128 829 162Q680 197 594 256Q508 315 512 384L530 700L1104 519Q1126 512 1152 512Q1178 512 1200 519ZM2282 993 1162 641Q1158 640 1152 640Q1146 640 1142 641L490 847Q447 813 419 736Q391 658 385 557Q448 521 448 448Q448 379 390 341L448 -92Q450 -106 440 -117Q431 -128 416 -128H224Q209 -128 200 -117Q190 -106 192 -92L250 341Q192 379 192 448Q192 521 257 559Q268 766 355 889L22 993Q0 1001 0 1024Q0 1047 22 1055L1142 1407Q1146 1408 1152 1408Q1158 1408 1162 1407L2282 1055Q2304 1047 2304 1024Q2304 1001 2282 993Z"/></svg>
    <div class="ni" style="top:631px;letter-spacing:0.11px">Offline Examinations</div>
    <svg width="6" height="9" viewBox="154 -1510 1036 1612" preserveAspectRatio="xMidYMid meet" class="a" style="left:182px;top:633px"><path fill="#c9ced6" transform="scale(1,-1)" d="M1171 1235 640 704 1171 173Q1190 154 1190 128Q1190 102 1171 83L1005 -83Q986 -102 960 -102Q934 -102 915 -83L173 659Q154 678 154 704Q154 730 173 749L915 1491Q934 1510 960 1510Q986 1510 1005 1491L1171 1325Q1190 1306 1190 1280Q1190 1254 1171 1235Z"/></svg>

    <svg class="a" style="left:24px;top:666.500px" width="19.500" height="15.600" viewBox="0 0 640 512" fill="#c9ced6"><path d="M624 416H381.500c-.7 19.800-14.700 32-32.700 32H288c-18.700 0-33-17.500-32.800-32H16c-8.800 0-16 7.200-16 16v16c0 35.200 28.800 64 64 64h512c35.200 0 64-28.800 64-64v-16c0-8.800-7.200-16-16-16zM576 48c0-26.400-21.600-48-48-48H112C85.600 0 64 21.600 64 48v336h512V48zm-64 272H128V64h384v256z"/></svg>
    <div class="ni" style="top:667px;letter-spacing:0.08px">Online Examinations</div>
    <svg width="6" height="9" viewBox="154 -1510 1036 1612" preserveAspectRatio="xMidYMid meet" class="a" style="left:182px;top:669px"><path fill="#c9ced6" transform="scale(1,-1)" d="M1171 1235 640 704 1171 173Q1190 154 1190 128Q1190 102 1171 83L1005 -83Q986 -102 960 -102Q934 -102 915 -83L173 659Q154 678 154 704Q154 730 173 749L915 1491Q934 1510 960 1510Q986 1510 1005 1491L1171 1325Q1190 1306 1190 1280Q1190 1254 1171 1235Z"/></svg>

    <svg class="a" style="left:24px;top:702.300px" width="20" height="14.500" viewBox="0 0 40 29" fill="#c9ced6"><circle cx="6.500" cy="7" r="3.700"/><circle cx="19" cy="6.700" r="6.500"/><path d="M0 18v-1.500a4.500 4.500 0 0 1 4.500-4.500h3.500a4.500 4.500 0 0 1 2.500.800a10 10 0 0 0-3.500 5.200z"/><path d="M8.500 25.500c0-6 3.800-9.500 8.300-9.500h4c.900 0 1.700.100 2.500.400a10 10 0 0 0 1.700 12.600H11.500a3 3 0 0 1-3-3z"/><path fill-rule="evenodd" d="M39.7 16.1L39.7 18.9L37.4 18.9L36.7 20.7L38.3 22.3L36.3 24.3L34.7 22.7L32.9 23.4L32.9 25.7L30.1 25.7L30.1 23.4L28.3 22.7L26.7 24.3L24.7 22.3L26.3 20.7L25.6 18.9L23.3 18.9L23.3 16.1L25.6 16.1L26.3 14.3L24.7 12.7L26.7 10.7L28.3 12.3L30.1 11.6L30.1 9.3L32.9 9.3L32.9 11.6L34.7 12.3L36.3 10.7L38.3 12.7L36.7 14.3L37.4 16.1zM28.9 17.5a2.6 2.6 0 1 0 5.2 0a2.6 2.6 0 1 0 -5.2 0z"/></svg>
    <div class="ni" style="top:703px;letter-spacing:-0.1px">Human Resource</div>
    <svg width="6" height="9" viewBox="154 -1510 1036 1612" preserveAspectRatio="xMidYMid meet" class="a" style="left:182px;top:705px"><path fill="#c9ced6" transform="scale(1,-1)" d="M1171 1235 640 704 1171 173Q1190 154 1190 128Q1190 102 1171 83L1005 -83Q986 -102 960 -102Q934 -102 915 -83L173 659Q154 678 154 704Q154 730 173 749L915 1491Q934 1510 960 1510Q986 1510 1005 1491L1171 1325Q1190 1306 1190 1280Q1190 1254 1171 1235Z"/></svg>

    <div class="nh" style="top:737px">MODULES</div>
  </div>

  <div id="navbar">
    <svg width="12.500" height="11" viewBox="0 -1280 1536 1280" preserveAspectRatio="xMidYMid meet" class="a" style="left:20px;top:18px"><path fill="#e9ecef" transform="scale(1,-1)" d="M1536 192V64Q1536 38 1517 19Q1498 0 1472 0H64Q38 0 19 19Q0 38 0 64V192Q0 218 19 237Q38 256 64 256H1472Q1498 256 1517 237Q1536 218 1536 192ZM1536 704V576Q1536 550 1517 531Q1498 512 1472 512H64Q38 512 19 531Q0 550 0 576V704Q0 730 19 749Q38 768 64 768H1472Q1498 768 1517 749Q1536 730 1536 704ZM1536 1216V1088Q1536 1062 1517 1043Q1498 1024 1472 1024H64Q38 1024 19 1043Q0 1062 0 1088V1216Q0 1242 19 1261Q38 1280 64 1280H1472Q1498 1280 1517 1261Q1536 1242 1536 1216Z"/></svg>
    <div class="ttl">Apex International School</div>
    <svg class="a" style="left:1197px;top:17px" width="15" height="15" viewBox="0 0 15 15" fill="none" stroke="#d6d9dc" stroke-linecap="round"><circle cx="6" cy="6" r="4.300" stroke-width="2.200"/><path d="M9.600 9.600l3.600 3.600" stroke-width="2.500"/></svg>
    <svg width="12.5" height="14" viewBox="64 -1536 1664 1792" preserveAspectRatio="xMidYMid meet" class="a" style="left:1237px;top:17px"><path fill="#cfd2d5" transform="scale(1,-1)" d="M896 -144Q837 -144 794 -102Q752 -59 752 0Q752 16 736 16Q720 16 720 0Q720 -73 772 -124Q823 -176 896 -176Q912 -176 912 -160Q912 -144 896 -144ZM1728 128Q1728 76 1690 38Q1652 0 1600 0H1152Q1152 -106 1077 -181Q1002 -256 896 -256Q790 -256 715 -181Q640 -106 640 0H192Q140 0 102 38Q64 76 64 128Q114 170 155 216Q196 262 240 336Q284 409 314 494Q345 579 364 700Q384 821 384 960Q384 1112 501 1242Q618 1373 808 1401Q800 1420 800 1440Q800 1480 828 1508Q856 1536 896 1536Q936 1536 964 1508Q992 1480 992 1440Q992 1420 984 1401Q1174 1373 1291 1242Q1408 1112 1408 960Q1408 821 1428 700Q1447 579 1478 494Q1508 409 1552 336Q1596 262 1637 216Q1678 170 1728 128Z"/></svg>
    <div id="nbadge">2</div>
    <div class="usr">apexadmin</div>
  </div>

  <!-- content: children use absolute screen coordinates -->
  <div class="a" style="left:0;top:-66px;width:1588px;height:892px">
    <div id="h1" style="top:125px">Collect Student Fees</div>
    <div id="card" style="top:174px"></div>

    <div class="btn" id="back">
      <svg width="12.5" height="12.5" viewBox="64 -1355 1472 1558" preserveAspectRatio="xMidYMid meet" class="a" style="left:8.300px;top:9.300px"><path fill="#fff" transform="scale(1,-1)" d="M1536 640V512Q1536 459 1504 422Q1471 384 1419 384H715L1008 90Q1046 54 1046 0Q1046 -54 1008 -90L933 -166Q896 -203 843 -203Q791 -203 752 -166L101 486Q64 523 64 576Q64 628 101 667L752 1317Q790 1355 843 1355Q895 1355 933 1317L1008 1243Q1046 1205 1046 1152Q1046 1099 1008 1061L715 768H1419Q1471 768 1504 730Q1536 693 1536 640Z"/></svg>
      <span class="a" style="left:21px;top:0.500px;line-height:29px;letter-spacing:-0.550px">Back</span>
    </div>

    <div id="avatar">
      <svg class="a" style="left:14px;top:5px" width="53" height="72" viewBox="0 0 53 72">
        <path d="M4.400 70.400V57c0-9 6.500-14.500 14.500-15h15.200c8 .500 14.900 6 14.900 15v13.400z" fill="#606060"/>
        <path d="M4.400 63.500V57c0-4 1.300-7.300 3.600-9.800l2.500 2.300v14zM49 63.500V57c0-4-1.300-7.300-3.600-9.800l-2.500 2.300v14z" fill="#4b4b4b"/>
        <path d="M4.400 63.500h6.100v6.900H4.400zM42.900 63.500H49v6.900h-6.100z" fill="#f7b48a"/>
        <path d="M21.500 37h10v6.500c-1.500 3-8.500 3-10 0z" fill="#f0a878"/>
        <ellipse cx="26.500" cy="23.500" rx="13.700" ry="16" fill="#f9cfa9"/>
        <path d="M12.500 24c-1.500-12 4-21 14-21s15.500 9 14 21c-1-3.500-2.500-6.500-4.500-8.500-1.500 1-3 1.500-5 1.800l1-3c-2.500 2-5.500 3.200-9 3.500l.800-2.500c-3 1.500-5.500 2.200-7 2.700-2 2-3.500 4-4.300 6z" fill="#b98a5e"/>
        <circle cx="19.500" cy="23.400" r="1.900" fill="#4a2c12"/><circle cx="33.500" cy="23.400" r="1.900" fill="#4a2c12"/>
        <path d="M14 29.500c3.500-1.500 8-.500 12.500-.500s9-1 12.800.500v4c0 4-5.800 6.500-12.800 6.500S14 37.500 14 33.500z" fill="#f2f2f2"/>
        <path d="M9.800 21C9 9 15.500 1.600 26.500 1.600S44 9 43.200 21" fill="none" stroke="#3b3d40" stroke-width="3.200"/>
        <rect x="6.800" y="18" width="5.800" height="13.800" rx="2.900" fill="#47494c"/><rect x="40.400" y="18" width="5.800" height="13.800" rx="2.900" fill="#47494c"/>
        <path d="M44 30.500c0 6-4 9-13 9.700" fill="none" stroke="#333" stroke-width="1.500"/>
        <rect x="24.300" y="38.800" width="7" height="2.900" rx="1.400" fill="#262626"/>
      </svg>
    </div>

    <div class="lb" style="left:460.5px;top:258.7px"><b style="letter-spacing:-0.02px">Name:</b></div><div class="lb" style="left:501px;top:258.7px;letter-spacing:-0.1px">Arush Mishra</div>
    <div class="lb" style="left:460.5px;top:292.3px"><b style="letter-spacing:0.01px">Father Name:</b></div><div class="lb" style="left:542.3px;top:292.3px;letter-spacing:-0.09px">Pradeep Mishra</div>
    <div class="lb" style="left:460.5px;top:325.5px"><b style="letter-spacing:0.04px">Mobile Number:</b></div><div class="lb" style="left:556.8px;top:325.5px;letter-spacing:-0.19px">9827923456</div>
    <div class="lb" style="left:831px;top:258.7px"><b style="letter-spacing:-0.21px">Class (Section):</b></div><div class="lb" style="left:923.5px;top:258.7px;letter-spacing:-0.48px">Class 2 (C)</div>
    <div class="lb" style="left:831px;top:292.3px"><b style="letter-spacing:-0.29px">Admission No:</b></div><div class="lb" style="left:917.5px;top:292.3px;letter-spacing:-0.87px">APEX93</div>
    <div class="lb" style="left:831px;top:325.5px"><b style="letter-spacing:-0.08px">Roll Number:</b></div><div class="lb" style="left:910.7px;top:325.5px;letter-spacing:-0.73px">APEXROLL93</div>

    <div class="tl" style="left:1194.7px;top:259.100px;letter-spacing:-0.17px">Total Assigned:</div><div class="tv" style="left:1288.8px;top:258.600px;color:#2563eb;letter-spacing:0.48px"><span class="r">&#8377;</span>23,500.00</div>
    <div class="tl" style="left:1194.7px;top:286.200px;letter-spacing:-0.07px">Total Paid:</div><div class="tv" style="left:1288.8px;top:285.700px;color:#10b981;letter-spacing:0.3px"><span class="r">&#8377;</span>0.00</div>
    <div class="tl" style="left:1194.7px;top:313.400px;letter-spacing:-0.18px">Balance Due:</div><div class="tv" style="left:1288.8px;top:312.900px;color:#dc2626;letter-spacing:0.48px"><span class="r">&#8377;</span>23,500.00</div>

    <div class="btn" id="csel">
      <svg class="a" style="left:9.200px;top:8.300px" width="16.500" height="14" viewBox="0 0 33 28" fill="#fff"><path d="M0 18.500h4.200V28H0z"/><path d="M6 19c2.500-2.200 6-2.700 9-1.300l4.300.300c2.100.200 2.100 3.200 0 3.300h-5 6.200l6.800-4.900c2.300-1.500 4.600 1.100 2.600 3.100L22.500 26c-1.100 1-2.600 1.600-4.100 1.600H6z"/><text x="14.500" y="13.500" font-family="Liberation Sans, sans-serif" font-size="19" font-weight="700" text-anchor="middle">$</text></svg>
      <span class="a" style="left:27.500px;top:1.500px;line-height:31px;letter-spacing:-0.250px">Collect Selected</span>
    </div>

    <div class="gh" style="top:427.500px;height:36.500px;line-height:36.5px;letter-spacing:-0.155px">Class 2 Installment Wise ( 4 Installment in Year ) 2025-26</div>
    <table id="t1" style="top:471px">
      <colgroup><col style="width:44.500px"><col style="width:308px"><col style="width:193px"><col style="width:133px"><col style="width:155px"><col style="width:95px"><col style="width:142px"><col style="width:150px"><col></colgroup>
      <tr><th><i class="cb"></i></th><th>Fees Type</th><th>Due Date</th><th>Status</th><th>Amount</th><th>Paid</th><th>Discount</th><th>Fine</th><th>Balance</th></tr>
      <tr class="f"><td><i class="cb"></i></td><td>1st Installment Fees</td><td>30 Mar, 2025</td><td><span class="bdg">Unpaid</span></td><td class="m"><span class="r">&#8377;</span>6,000.00</td><td class="m"><span class="r">&#8377;</span>0.00</td><td class="m"><span class="r">&#8377;</span>0.00</td><td class="m"><span class="r">&#8377;</span>0.00</td><td class="m"><span class="r">&#8377;</span>6,000.00</td></tr>
      <tr><td><i class="cb"></i></td><td>2nd Installment Fees</td><td>30 Jun, 2025</td><td><span class="bdg">Unpaid</span></td><td class="m"><span class="r">&#8377;</span>6,000.00</td><td class="m"><span class="r">&#8377;</span>0.00</td><td class="m"><span class="r">&#8377;</span>0.00</td><td class="m"><span class="r">&#8377;</span>0.00</td><td class="m"><span class="r">&#8377;</span>6,000.00</td></tr>
      <tr><td><i class="cb"></i></td><td>3rd Installment Fees</td><td>22 Sep, 2025</td><td><span class="bdg">Unpaid</span></td><td class="m"><span class="r">&#8377;</span>6,000.00</td><td class="m"><span class="r">&#8377;</span>0.00</td><td class="m"><span class="r">&#8377;</span>0.00</td><td class="m"><span class="r">&#8377;</span>0.00</td><td class="m"><span class="r">&#8377;</span>6,000.00</td></tr>
      <tr class="l"><td><i class="cb"></i></td><td>4th Installment Fees</td><td>31 Dec, 2025</td><td><span class="bdg">Unpaid</span></td><td class="m"><span class="r">&#8377;</span>3,000.00</td><td class="m"><span class="r">&#8377;</span>0.00</td><td class="m"><span class="r">&#8377;</span>0.00</td><td class="m"><span class="r">&#8377;</span>0.00</td><td class="m"><span class="r">&#8377;</span>3,000.00</td></tr>
    </table>

    <div class="gh" style="top:656px;height:36.500px;line-height:36.5px;letter-spacing:-0.3px">Admission Fees 2025-26</div>
    <table id="t2" style="top:700.3px">
      <colgroup><col style="width:47.500px"><col style="width:246.700px"><col style="width:204.300px"><col style="width:141px"><col style="width:164px"><col style="width:101px"><col style="width:150px"><col style="width:150px"><col></colgroup>
      <tr><th><i class="cb"></i></th><th>Fees Type</th><th>Due Date</th><th>Status</th><th>Amount</th><th>Paid</th><th>Discount</th><th>Fine</th><th>Balance</th></tr>
      <tr class="f"><td><i class="cb"></i></td><td style="letter-spacing:-0.360px">Admission Fees</td><td>31 Dec, 2025</td><td><span class="bdg">Unpaid</span></td><td class="m"><span class="r">&#8377;</span>2,500.00</td><td class="m"><span class="r">&#8377;</span>0.00</td><td class="m"><span class="r">&#8377;</span>0.00</td><td class="m"><span class="r">&#8377;</span>0.00</td><td class="m"><span class="r">&#8377;</span>2,500.00</td></tr>
    </table>

    <div id="gbar"></div>
  </div>
</div>

<div id="sb"><div class="up"></div><div class="th"></div><div class="dn"></div></div>

<!-- ================= TASKBAR ================= -->
<div id="taskbar">
  <!-- start -->
  <svg class="a" style="left:17px;top:10.500px" width="20" height="20" viewBox="0 0 20 20"><rect x="0" y="0" width="9.300" height="9.300" rx=".600" fill="#63cdfb"/><rect x="10.700" y="0" width="9.300" height="9.300" rx=".600" fill="#3fb6f3"/><rect x="0" y="10.700" width="9.300" height="9.300" rx=".600" fill="#3fb6f3"/><rect x="10.700" y="10.700" width="9.300" height="9.300" rx=".600" fill="#1c9bea"/></svg>
  <div id="tsearch">
    <svg class="a" style="left:9px;top:6.500px" width="13" height="13" viewBox="0 0 13 13" fill="none" stroke="#f0f0f0" stroke-width="1.500" stroke-linecap="round"><circle cx="5.300" cy="5.300" r="4.300"/><path d="M8.600 8.600 12 12"/></svg>
    <span class="t">Search</span>
    <svg class="a" style="left:143px;top:3px" width="36" height="23" viewBox="0 0 36 23"><ellipse cx="18" cy="20" rx="16" ry="2" fill="#c47a4a"/><path d="M8 6c0-3 4-4 5-1 1 3 3 4 7 5 5 1 8 4 7 8l-3 1c-5 1-10-1-11-5-1-3-3-4-5-8z" fill="#6f5bb5"/><path d="M19 9c4 0 8 3 8 8l-6 1c-3-2-4-6-2-9z" fill="#c0509a"/><path d="M7 4l3-2 2 2-2 2z" fill="#2aa7e0"/><path d="M15 18v3M18 18v3" stroke="#e3b23c" stroke-width="1.200"/></svg>
  </div>

  <!-- pinned apps -->
  <!-- 251 folder + cloud -->
  <svg class="ti" style="left:239px" viewBox="0 0 24 24"><path d="M4 3h7l2 2v14H4z" fill="#f2c94c"/><path d="M4 3h4v16H4z" fill="#e0a92e"/><path d="M11 19.500a3.500 3.500 0 0 1 1-6.800 4.500 4.500 0 0 1 8.500 1 3 3 0 0 1-.500 5.800z" fill="#2f8fe8"/></svg>
  <!-- 288 explorer -->
  <svg class="ti" style="left:276px" viewBox="0 0 24 24"><path d="M1.500 5a1.500 1.500 0 0 1 1.500-1.500h5l2 2.500h11a1.500 1.500 0 0 1 1.500 1.500V19a1.500 1.500 0 0 1-1.500 1.500H3A1.500 1.500 0 0 1 1.500 19z" fill="#f4c430"/><path d="M1.500 8h21v2h-21z" fill="#e9a820"/><rect x="7" y="14.500" width="10" height="6" rx="1" fill="#1f88e5"/></svg>
  <!-- 323 light square -->
  <svg class="ti" style="left:311px" viewBox="0 0 24 24"><rect x="2.500" y="3" width="19" height="18" fill="#3b352c"/><rect x="4.500" y="5" width="15" height="14" fill="#8c826f"/><rect x="6.500" y="7" width="11" height="10" fill="#cfc7b4"/><rect x="9" y="9.500" width="7" height="6.500" fill="#fffef8"/></svg>
  <!-- 360 grey hex -->
  <svg class="ti" style="left:348px" viewBox="0 0 24 24"><path d="M12 1.500l9 5.200v10.600l-9 5.200-9-5.200V6.700z" fill="#7a848e"/><path d="M12 1.500l9 5.200-9 5.300-9-5.300z" fill="#aab3bc"/><path d="M12 12v10.500l-9-5.200V6.700z" fill="#555e67"/><path d="M12 7l5 8.500H7z" fill="#30353b"/></svg>
  <!-- 398 whatsapp -->
  <svg width="20.5" height="20.5" viewBox="0 -1414 1536 1548" preserveAspectRatio="xMidYMid meet" class="a" style="left:387.500px;top:8.5px"><path fill="#25d366" transform="scale(1,-1)" d="M1172 465Q1174 460 1174 450Q1174 417 1157 374Q1141 335 1086 308Q1031 282 984 282Q927 282 794 344Q696 389 624 462Q552 535 476 647Q404 754 405 841V849Q408 940 479 1007Q503 1029 531 1029Q537 1029 549 1028Q561 1026 568 1026Q587 1026 594 1020Q602 1013 610 992Q618 972 643 904Q668 836 668 829Q668 808 634 772Q599 735 599 725Q599 718 604 710Q638 637 706 573Q762 520 857 472Q869 465 879 465Q894 465 933 514Q972 562 985 562Q998 562 1082 518Q1167 474 1172 465ZM782 32Q909 32 1026 82Q1142 132 1226 216Q1310 300 1360 416Q1410 533 1410 660Q1410 787 1360 904Q1310 1020 1226 1104Q1142 1188 1026 1238Q909 1288 782 1288Q655 1288 538 1238Q422 1188 338 1104Q254 1020 204 904Q154 787 154 660Q154 457 274 292L195 59L437 136Q595 32 782 32ZM782 -94Q587 -94 417 0L0 -134L136 271Q28 449 28 660Q28 813 88 952Q148 1092 249 1193Q350 1294 490 1354Q629 1414 782 1414Q935 1414 1074 1354Q1214 1294 1315 1193Q1416 1092 1476 952Q1536 813 1536 660Q1536 507 1476 368Q1416 228 1315 127Q1214 26 1074 -34Q935 -94 782 -94Z"/></svg>
  <div class="a" style="left:398px;top:3.5px;width:16px;height:16px;border-radius:8px;background:#4cc2ff;color:#0b2233;font-size:10px;line-height:16px;text-align:center;letter-spacing:-0.6px">21</div>
  <!-- 434 chrome (active) -->
  <div class="a" style="left:418px;top:2px;width:33px;height:34px;border-radius:4px;background:#2a2a2a;border:1px solid #323232"></div>
  <svg class="ti" style="left:423px;width:21.5px;height:21.5px;top:8.5px" viewBox="0 0 24 24"><circle cx="12" cy="12" r="11" fill="#fbc02d"/><path d="M12 12 2.500 6.500A11 11 0 0 1 21.500 6.500z" fill="#e53935"/><path d="M12 1a11 11 0 0 1 9.500 5.500H12z" fill="#e53935"/><path d="M2.500 6.500A11 11 0 0 0 10 22.800L15 14 12 12z" fill="#43a047"/><path d="M2.500 6.500 8 16l4-4z" fill="#43a047"/><circle cx="12" cy="12" r="5" fill="#fff"/><circle cx="12" cy="12" r="4" fill="#4285f4"/></svg>
  <div class="tu" style="left:428.7px;width:11.3px;background:#4cc2ff;height:3px;top:32.5px"></div>
  <!-- 471 edge -->
  <svg class="ti" style="left:459px" viewBox="0 0 24 24"><circle cx="12" cy="12" r="10.500" fill="#1b8fd8"/><path d="M2 13c0-6 5-10.500 10.500-10.500 5 0 9.500 3.500 9.500 8 0 3-2 4.500-4.500 4.500-2 0-3-.800-3-2 0-.800.500-1.200.500-2 0-1.500-1.500-3-4-3C7 8 3 10 2 13z" fill="#45d3a4"/><path d="M9 11.500c-1.500 1-2 3-1.500 5 1 3 4 5 7.500 5 2.500 0 4.500-1 6-2.500-5 2-10-1-10-5 0-1 .200-2 .800-2.800z" fill="#0c59a4"/></svg>
  <!-- 508 firefox -->
  <svg class="ti" style="left:496px" viewBox="0 0 24 24"><circle cx="12" cy="13" r="9.500" fill="#ff9a1f"/><path d="M12 2c1 2 3 3 5 5 3 3 4 6 3 9a8.500 8.500 0 0 1-16 0c-1-3 0-6 2-8 0 1 .500 2 1 2.500C7 8 9 4 12 2z" fill="#ff5b2b"/><path d="M14 1c2 2 4 4 5 7-1-1-2-1.500-3-1.500C16 4.500 15 2.500 14 1z" fill="#ffcb3a"/><circle cx="12.500" cy="13.500" r="4.500" fill="#7b3fe0"/><path d="M8 11c1-1.500 3-2 5-1.500-1.500.500-2 1.500-2 2.500z" fill="#ffb52e"/></svg>
  <!-- 544 brave -->
  <svg class="ti" style="left:532px" viewBox="0 0 24 24"><path d="M7 2.500h10l2 2.500 1.500-.500L22 8l-1.500 9L12 22.500 3.500 17 2 8l1.500-3.500L5 5z" fill="#fb542b"/><path d="M12 7l3-1 2.500 3-1.500 3 1 2.500-5 4-5-4 1-2.500-1.500-3L9 6z" fill="#fff"/><path d="M12 11l2 2.500-2 2-2-2z" fill="#fb542b"/></svg>
  <!-- 581 opera -->
  <svg class="ti" style="left:569px" viewBox="0 0 24 24"><circle cx="12" cy="12" r="10.500" fill="#e0101a"/><ellipse cx="12" cy="12" rx="4.800" ry="8" fill="#1c1c1c"/></svg>
  <!-- 618 tor -->
  <svg class="ti" style="left:606px" viewBox="0 0 24 24"><circle cx="12" cy="12" r="10.500" fill="#8b3fd6"/><path d="M12 3.500a8.500 8.500 0 0 1 0 17" fill="none" stroke="#e9d6fb" stroke-width="1.600"/><path d="M12 7a5 5 0 0 1 0 10" fill="none" stroke="#e9d6fb" stroke-width="1.600"/><circle cx="12" cy="12" r="1.800" fill="#e9d6fb"/></svg>
  <!-- 654 word -->
  <svg class="ti" style="left:642px" viewBox="0 0 24 24"><rect x="7" y="2.500" width="15" height="19" rx="1.500" fill="#2b7cd3"/><rect x="7" y="2.500" width="15" height="5" fill="#41a5ee"/><rect x="7" y="12" width="15" height="4.800" fill="#185abd"/><rect x="7" y="16.800" width="15" height="4.700" rx="1" fill="#103f91"/><rect x="1.500" y="6.500" width="11.500" height="11.500" rx="1.200" fill="#185abd"/><text x="7.200" y="15.500" font-family="Liberation Sans, sans-serif" font-size="8.500" font-weight="700" fill="#fff" text-anchor="middle">W</text></svg>
  <!-- 691 android studio -->
  <svg class="ti" style="left:679px" viewBox="0 0 24 24"><circle cx="12" cy="12" r="10.500" fill="#f4f6f8"/><path d="M12 5 7.500 18M12 5l4.500 13M9 14h6" stroke="#3b7de0" stroke-width="1.800" fill="none" stroke-linecap="round"/><circle cx="12" cy="5.500" r="1.700" fill="#3b7de0"/><path d="M16 19a6 6 0 0 0 3-3" stroke="#3ddc84" stroke-width="2" fill="none"/></svg>
  <!-- 727 pycharm -->
  <svg class="ti" style="left:715px" viewBox="0 0 24 24"><rect x="2" y="2" width="20" height="20" fill="#d7e63a"/><rect x="2" y="2" width="8" height="8" fill="#21d789"/><rect x="4.500" y="4.500" width="15" height="15" fill="#0b0b0b"/><text x="12" y="12.800" font-family="Liberation Sans, sans-serif" font-size="7.500" font-weight="700" fill="#fff" text-anchor="middle">PC</text><rect x="6.500" y="16" width="5" height="1.300" fill="#fff"/></svg>
  <!-- 764 light cube -->
  <svg class="ti" style="left:752px" viewBox="0 0 24 24"><path d="M12 2l9 4.500v11L12 22l-9-4.500v-11z" fill="#9cc3ee"/><path d="M12 2l9 4.500-9 4.500-9-4.500z" fill="#dcebfb"/><path d="M12 11v11l-9-4.500v-11z" fill="#7fa9dc"/></svg>
  <!-- 801 colour cube -->
  <svg class="ti" style="left:789px" viewBox="0 0 24 24"><path d="M12 1.500l9.500 5.300v10.400L12 22.500l-9.500-5.300V6.800z" fill="#b5485d"/><path d="M12 1.500l9.500 5.300L12 12 2.500 6.800z" fill="#8fb83e"/><path d="M12 12l9.500-5.200v10.400L12 22.500z" fill="#4a86c5"/><path d="M12 6.500l5 2.700v5.600l-5 2.700-5-2.700V9.200z" fill="#eef1f4"/></svg>
  <!-- 838 blue monitor -->
  <svg class="ti" style="left:826px" viewBox="0 0 24 24"><circle cx="12" cy="12" r="10.500" fill="#2b87e8"/><rect x="6" y="7" width="12" height="8" rx="1" fill="#fff"/><path d="M9 18h6M12 15v3" stroke="#fff" stroke-width="1.600"/><path d="M8 13l7-5v5z" fill="#9ec9f7"/></svg>
  <!-- 874 notepad++ -->
  <svg class="ti" style="left:862px" viewBox="0 0 24 24"><rect x="3.500" y="2.500" width="15" height="19" fill="#f3f3e6" stroke="#8a8a6a" stroke-width=".800"/><rect x="5" y="11" width="12" height="9" fill="#8fce3f"/><path d="M6 6h9M6 8.500h9" stroke="#777" stroke-width="1"/><path d="M21 2.500 11 15l-1.500 4 3.500-2.500L22.500 4z" fill="#f0b429" stroke="#a5661a" stroke-width=".600"/></svg>
  <!-- 911 vscode -->
  <svg class="ti" style="left:899px" viewBox="0 0 24 24"><path d="M17 1.500 22 4v16l-5 2.500L5.500 13 2.500 15.500 1 14.500v-5l1.500-1L5.500 11zM17 7.500 11 12l6 4.500z" fill="#2a9df4" fill-rule="evenodd"/><path d="M17 1.500 22 4v16l-5 2.500z" fill="#1477c9"/></svg>
  <!-- 947 winscp -->
  <svg class="ti" style="left:935px" viewBox="0 0 24 24"><path d="M2 2h8L7.500 4.500l4 4-3 3-4-4L2 10z" fill="#2aa5e8"/><path d="M22 22h-8l2.500-2.500-4-4 3-3 4 4L22 14z" fill="#4fc22f"/><rect x="7" y="10" width="10" height="8" rx="1" fill="#c9ccd1"/><path d="M9 10V8a3 3 0 0 1 6 0v2" fill="none" stroke="#b0b4ba" stroke-width="1.800"/></svg>
  <!-- 984 putty -->
  <svg class="ti" style="left:972px" viewBox="0 0 24 24"><rect x="11" y="3" width="10" height="8" fill="#d9dde2" stroke="#222" stroke-width=".800"/><rect x="12.500" y="4.500" width="7" height="5" fill="#1d33c9"/><rect x="3" y="12" width="10" height="8" fill="#d9dde2" stroke="#222" stroke-width=".800"/><rect x="4.500" y="13.500" width="7" height="5" fill="#1d33c9"/><path d="M14 7l-3 4h3l-3 5" stroke="#f6e11c" stroke-width="1.800" fill="none"/><rect x="2" y="20.500" width="12" height="1.500" fill="#aeb2b8"/></svg>
  <!-- 1020 postgres -->
  <svg class="ti" style="left:1009px" viewBox="0 0 24 24"><path d="M4.500 3.500C7 1.500 10.500 1.800 12.500 3c3-1.800 8-1 9.300 3 1 3.500-1 7.500-3 10l1.700 1-.400 1.300-3.300-.300c-.300 2.300-1 4.300-3 4.700-2.300.400-3.500-1.200-3.600-3.700l-.200-4C6 14.500 2.500 10.500 2.700 7c.100-1.500.800-2.700 1.800-3.500z" fill="#3f6f9f" stroke="#1f3f63" stroke-width=".700"/><path d="M8.300 5.500c1-1.200 3.300-1.200 4.200 0 1 2 .900 5.500 0 8.500l-.300 6M15.500 4.500c1.800 0 3.200 1.500 3 4-.200 2.500-1.500 5-2.800 6.500" fill="none" stroke="#e6eef7" stroke-width=".900"/><circle cx="9.300" cy="7.500" r=".800" fill="#fff"/><circle cx="16" cy="7.500" r=".700" fill="#fff"/></svg>
  <!-- 1057 chrome profile -->
  <svg class="ti" style="left:1046.500px" viewBox="0 0 24 24"><circle cx="11.500" cy="12.500" r="10.500" fill="#fbc02d"/><path d="M11.500 12.500 2.400 7.200A10.500 10.500 0 0 1 20.600 7.200z" fill="#e53935"/><path d="M2.400 7.200A10.500 10.500 0 0 0 9.500 22.800L14.200 14.500 11.500 12.500 7.500 16z" fill="#43a047"/><circle cx="11.500" cy="12.500" r="4.800" fill="#fff"/><circle cx="11.500" cy="12.500" r="3.800" fill="#4285f4"/><circle cx="18.500" cy="6" r="4.500" fill="#8e24aa"/><text x="18.500" y="8" font-family="Liberation Sans, sans-serif" font-size="5.500" fill="#f3d9fb" text-anchor="middle">P</text></svg>
  <!-- 1094 postman -->
  <svg class="ti" style="left:1082px" viewBox="0 0 24 24"><circle cx="12" cy="12" r="10.500" fill="#ff6c37"/><path d="M17.500 5.500c1.500 1.500 1 3-1 4l-6 6-3.500 2 2-3.500 6-6c.500-1.500 1.500-2.500 2.500-2.500z" fill="#fff"/><path d="M7 18l2-1-1-1z" fill="#333"/></svg>
  <!-- 1130 snipping -->
  <svg class="ti" style="left:1116.500px;top:14.500px;width:24px;height:24px" viewBox="0 0 28 28"><rect x="3" y="3" width="18" height="18" rx="2" fill="#f4f4f4"/><rect x="5.500" y="5.500" width="13" height="13" fill="none" stroke="#d9342b" stroke-width="2" stroke-dasharray="2.500 1.500"/><rect x="7" y="3" width="10" height="2.500" fill="#d9342b"/><path d="M16 25l8-8M16 17l8 8" stroke="#3aa0e8" stroke-width="1.500"/><circle cx="25" cy="16" r="1.800" fill="none" stroke="#3aa0e8" stroke-width="1.200"/><circle cx="25" cy="26" r="1.800" fill="none" stroke="#3aa0e8" stroke-width="1.200"/></svg>

  <!-- running indicators -->
  <div class="tu" style="left:285.500px;width:5px"></div>
  <div class="tu" style="left:395.500px;width:5px"></div>
  <div class="tu" style="left:505.500px;width:5px"></div>
  <div class="tu" style="left:651.500px;width:5px"></div>
  <div class="tu" style="left:871.500px;width:5px"></div>
  <div class="tu" style="left:908.500px;width:5px"></div>
  <div class="tu" style="left:1055.500px;width:5px"></div>
  <div class="tu" style="left:1126.500px;width:9px;background:#8a8a8a"></div>
  <div class="tu" style="left:1091.500px;width:5px"></div>

  <!-- tray -->
  <svg width="21" height="13.500" viewBox="0 -1408 1920 1408" preserveAspectRatio="xMidYMid meet" class="a" style="left:1357px;top:11.500px"><path fill="#a9c4ee" transform="scale(1,-1)" d="M1920 384Q1920 225 1808 112Q1695 0 1536 0H448Q263 0 132 132Q0 263 0 448Q0 580 71 690Q142 799 258 853Q256 881 256 896Q256 1108 406 1258Q556 1408 768 1408Q926 1408 1054 1320Q1183 1232 1242 1090Q1312 1152 1408 1152Q1514 1152 1589 1077Q1664 1002 1664 896Q1664 821 1623 758Q1752 728 1836 624Q1920 519 1920 384Z"/></svg>
  <div class="a" style="left:1366px;top:5px;width:14px;height:14px;border-radius:7px;background:#f28b9a;color:#1b1b1b;font-size:9.500px;line-height:14px;text-align:center">6</div>
  <svg class="a" style="left:1404px;top:16px" width="10" height="6" viewBox="0 0 10 6" fill="none" stroke="#f2f2f2" stroke-width="1.300" stroke-linecap="round" stroke-linejoin="round"><path d="M.800 5.200 5 1l4.200 4.200"/></svg>
  <div class="tt" style="left:1421px;top:8px;width:40px;text-align:center;font-size:10px;letter-spacing:-0.500px">ENG</div>
  <div class="tt" style="left:1421px;top:21.500px;width:40px;text-align:center;font-size:10px;letter-spacing:-0.300px">IN</div>
  <svg class="a" style="left:1465px;top:13.500px" width="15" height="11" viewBox="0 0 30 22" fill="none" stroke="#f2f2f2" stroke-width="2.200" stroke-linecap="round"><path d="M2 8c7-7.500 19-7.500 26 0"/><path d="M6.500 12.500c5-5 12-5 17 0"/><path d="M11 17c2.500-2.500 5.500-2.500 8 0"/><circle cx="15" cy="20" r="1.200" fill="#f2f2f2" stroke="none"/></svg>
  <svg class="a" style="left:1485px;top:13px" width="15" height="12" viewBox="0 0 30 24" fill="none" stroke="#f2f2f2" stroke-width="2" stroke-linecap="round" stroke-linejoin="round"><path d="M2 8.500h4L12 3v18l-6-5.500H2z"/><path d="M16 8.500c2 2 2 5 0 7"/><path d="M19.500 5.500c4 4 4 9 0 13"/><path d="M23 2.500c6 6 6 13 0 19"/></svg>
  <svg class="a" style="left:1504px;top:13px" width="16" height="12" viewBox="0 0 32 24" fill="none" stroke="#f2f2f2" stroke-width="2" stroke-linejoin="round"><rect x="2" y="7" width="24" height="13" rx="3"/><path d="M28.500 11v5" stroke-linecap="round"/><rect x="5.500" y="10.500" width="11" height="6" rx="1" fill="#f2f2f2" stroke="none"/><path d="M9 1v8M5 5l4-4 4 4" stroke-width="1.800"/></svg>
  <div class="tt" style="left:1500px;top:8px;width:85px;text-align:right;letter-spacing:-0.450px">19:59:35</div>
  <div class="tt" style="left:1500px;top:21.500px;width:85px;text-align:right;letter-spacing:-0.300px">26-09-2025</div>
</div>
</body>
</html>
